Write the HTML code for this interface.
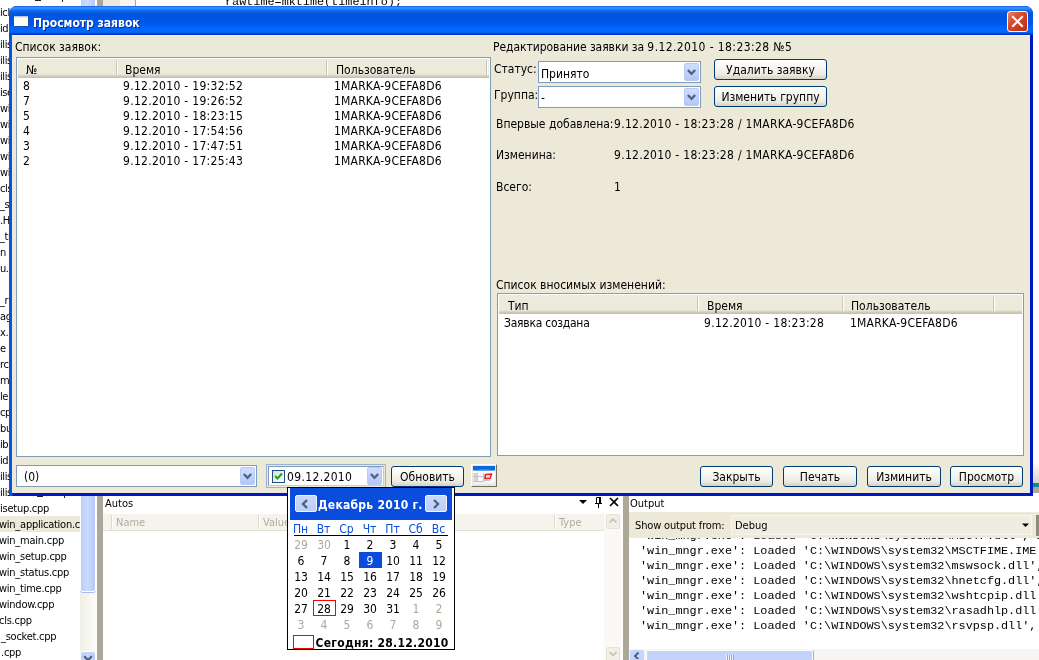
<!DOCTYPE html>
<html lang="ru">
<head>
<meta charset="utf-8">
<title>Просмотр заявок</title>
<style>
html,body{margin:0;padding:0;}
body{width:1039px;height:660px;overflow:hidden;background:#fff;position:relative;
  font-family:"DejaVu Sans Condensed","DejaVu Sans","Liberation Sans",sans-serif;font-size:12px;color:#000;}
.a{position:absolute;}
#bg,#win,#cal{will-change:transform;}
.t{position:absolute;white-space:nowrap;line-height:15px;height:15px;font-size:12px;margin-top:1px;}
.s{font-family:"DejaVu Sans Condensed","DejaVu Sans","Liberation Sans",sans-serif;font-size:11px;line-height:16px;height:16px;position:absolute;white-space:nowrap;}
.f{letter-spacing:-.25px;}
.m{font-family:"Liberation Mono","DejaVu Sans Mono",monospace;font-size:11.8px;line-height:15px;height:15px;position:absolute;white-space:pre;}
/* ---------- background IDE ---------- */
#bg{left:0;top:0;width:1039px;height:660px;overflow:hidden;}
/* ---------- dialog ---------- */
#win{left:9px;top:6px;width:1024px;height:490px;background:linear-gradient(to right,#0b50e6 0,#0b50e6 3px,#0018c4 4px,#0018c4 100%);border-radius:8px 8px 0 0;overflow:hidden;}
#tb{left:0;top:0;width:1024px;height:29px;
  background:linear-gradient(to bottom,#0a50d4 0,#2e86fc 1px,#3b92ff 2px,#1d7bfc 3.5px,#0a67f2 5px,#025adc 7px,#0055dc 9px,#0055e3 12px,#0058ea 18px,#0363fa 21px,#0468ff 25px,#0560f0 26.5px,#0141d3 27.8px,#002fbf 29px);}
#cl{left:3px;top:29px;width:1018px;height:458px;background:#ece9d8;box-shadow:inset 0 1px 0 #f7f3e2;}
.lst{background:#fff;border:1px solid #7f9db9;box-sizing:border-box;overflow:hidden;}
.hd{left:1px;top:1px;right:1px;height:19px;background:linear-gradient(to bottom,#ebeadb 0,#ebeadb 15px,#e0dccc 16px,#d3cfbf 17px,#c8c4b4 18px,#c5c1b1 19px);}
.sep{top:2px;width:1px;height:14px;background:#c7c5b2;box-shadow:1px 0 0 #fff;}
.cb{background:#fff;border:1px solid #7f9db9;box-sizing:border-box;}
.dd{width:15px;background:linear-gradient(to bottom,#cfdcfd 0,#c1d2fb 50%,#b4c8f6 100%);border:1px solid #b8c9f5;border-radius:2px;box-sizing:border-box;}
.dd svg{position:absolute;left:2px;top:50%;margin-top:-3px;}
.c{width:23px;height:16px;line-height:19px;text-align:center;font-size:12px;margin-top:0;text-indent:-1px;}
.d{letter-spacing:.3px;}
.btn{box-sizing:border-box;border:1px solid #003c74;border-radius:3px;background:linear-gradient(to bottom,#ffffff 0,#f6f5f0 40%,#ecebe5 75%,#d6d0c5 100%);text-align:center;font-size:12px;line-height:21px;white-space:nowrap;}
</style>
</head>
<body>
<div id="bg" class="a">
<div class="a" style="left:0;top:0;width:80px;height:660px;background:#fff;overflow:hidden;">
<div class="a" style="left:0;top:516px;width:80px;height:16px;background:#ece9d8;"></div>
<div class="s" style="left:0;top:5px;letter-spacing:-.4px;">ich</div>
<div class="s" style="left:0;top:21px;letter-spacing:-.4px;">id.</div>
<div class="s" style="left:0;top:37px;letter-spacing:-.4px;">ilis</div>
<div class="s" style="left:0;top:53px;letter-spacing:-.4px;">ilis</div>
<div class="s" style="left:0;top:69px;letter-spacing:-.4px;">ilis</div>
<div class="s" style="left:0;top:85px;letter-spacing:-.4px;">ise</div>
<div class="s" style="left:0;top:101px;letter-spacing:-.4px;">wi</div>
<div class="s" style="left:0;top:117px;letter-spacing:-.4px;">wi</div>
<div class="s" style="left:0;top:133px;letter-spacing:-.4px;">wi</div>
<div class="s" style="left:0;top:149px;letter-spacing:-.4px;">wi</div>
<div class="s" style="left:0;top:165px;letter-spacing:-.4px;">wi</div>
<div class="s" style="left:0;top:181px;letter-spacing:-.4px;">cls</div>
<div class="s" style="left:0;top:197px;letter-spacing:-.4px;">_s</div>
<div class="s" style="left:0;top:213px;letter-spacing:-.4px;">.H</div>
<div class="s" style="left:0;top:229px;letter-spacing:-.4px;">_tr</div>
<div class="s" style="left:0;top:245px;letter-spacing:-.4px;">n</div>
<div class="s" style="left:0;top:261px;letter-spacing:-.4px;">u.l</div>
<div class="s" style="left:0;top:293px;letter-spacing:-.4px;">_r</div>
<div class="s" style="left:0;top:309px;letter-spacing:-.4px;">ag</div>
<div class="s" style="left:0;top:325px;letter-spacing:-.4px;">x.</div>
<div class="s" style="left:0;top:341px;letter-spacing:-.4px;">e F</div>
<div class="s" style="left:0;top:357px;letter-spacing:-.4px;">rc</div>
<div class="s" style="left:0;top:373px;letter-spacing:-.4px;">mr</div>
<div class="s" style="left:0;top:389px;letter-spacing:-.4px;">le</div>
<div class="s" style="left:0;top:405px;letter-spacing:-.4px;">cp</div>
<div class="s" style="left:0;top:421px;letter-spacing:-.4px;">bu</div>
<div class="s" style="left:0;top:437px;letter-spacing:-.4px;">ibu</div>
<div class="s" style="left:0;top:453px;letter-spacing:-.4px;">id.</div>
<div class="s" style="left:0;top:469px;letter-spacing:-.4px;">ilis</div>
<div class="s" style="left:0;top:485px;letter-spacing:-.4px;">ilis</div>
<div class="s f" style="left:0px;top:501px;">isetup.cpp</div>
<div class="s f" style="left:-1px;top:517px;">win_application.cpp</div>
<div class="s f" style="left:-1px;top:533px;">win_main.cpp</div>
<div class="s f" style="left:-1px;top:549px;">win_setup.cpp</div>
<div class="s f" style="left:-1px;top:565px;">win_status.cpp</div>
<div class="s f" style="left:-1px;top:581px;">win_time.cpp</div>
<div class="s f" style="left:-1px;top:597px;">window.cpp</div>
<div class="s f" style="left:-1px;top:613px;">cls.cpp</div>
<div class="s f" style="left:1px;top:629px;">_socket.cpp</div>
<div class="s f" style="left:1px;top:645px;">.cpp</div>
<div class="a" style="left:37px;top:496px;width:6px;height:1px;background:#222;"></div><div class="a" style="left:64px;top:496px;width:1px;height:2px;background:#222;"></div><div class="a" style="left:35px;top:0;width:6px;height:1px;background:#222;"></div><div class="a" style="left:62px;top:0;width:1px;height:2px;background:#222;"></div>
</div>
<div class="a" style="left:80px;top:0;width:17px;height:660px;background:linear-gradient(to right,#efeee6,#fdfdfb);"></div>
<div class="a" style="left:80px;top:-3px;width:16px;height:595px;box-sizing:border-box;border:1px solid #fff;border-radius:3px;background:linear-gradient(to right,#bccdf9 0,#cbdafe 45%,#c3d3fc 70%,#b5c7f6 100%);box-shadow:0 1px 0 #a9bdf0;"></div>
<div class="a" style="left:80px;top:651px;width:16px;height:12px;box-sizing:border-box;border:1px solid #fff;border-radius:3px;background:linear-gradient(to right,#bccdf9,#c9d8fd 50%,#b9cbf8);"><svg width="14" height="9" viewBox="0 0 14 9" style="position:absolute;left:0;top:0"><path d="M3.2 4.2 L7 8 L10.8 4.2" stroke="#4d6185" stroke-width="2.2" fill="none"/></svg></div>
<div class="a" style="left:97px;top:0;width:6px;height:660px;background:#aca899;"></div>
<div class="a" style="left:103px;top:0;width:17px;height:6px;background:#ece9d8;"></div>
<div class="a" style="left:120px;top:0;width:15px;height:6px;background:#f6f5ee;"></div>
<div class="a" style="left:135px;top:0;width:1px;height:6px;background:#a5a5a5;"></div>
<div class="m" style="left:225px;top:-5.5px;">rawtime=mktime(timeinfo);</div>
<div class="a" style="left:1033px;top:464px;width:6px;height:19px;background:linear-gradient(to bottom,#fafaf7,#d9d6c8);"></div>
<div class="a" style="left:1033px;top:483px;width:6px;height:4px;background:#0b8a86;"></div>
<div class="a" style="left:1033px;top:487px;width:6px;height:6px;background:#aca899;"></div>
<div class="s" style="left:105px;top:496px;">Autos</div>
<div class="a" style="left:103px;top:514px;width:501px;height:16px;background:#f5f4ec;border-bottom:1px solid #e3e0d3;"></div>
<div class="a" style="left:111px;top:515px;width:1px;height:14px;background:#dddac9;box-shadow:1px 0 0 #fff;"></div>
<div class="a" style="left:258px;top:515px;width:1px;height:14px;background:#dddac9;box-shadow:1px 0 0 #fff;"></div>
<div class="a" style="left:554px;top:515px;width:1px;height:14px;background:#dddac9;box-shadow:1px 0 0 #fff;"></div>
<div class="s" style="left:116px;top:515px;color:#b0ad9f;">Name</div><div class="s" style="left:263px;top:515px;color:#b0ad9f;">Value</div><div class="s" style="left:559px;top:515px;color:#b0ad9f;">Type</div>
<svg class="a" style="left:578px;top:496px" width="42" height="14" viewBox="0 0 42 14"><path d="M1 4 L9 4 L5 8 Z" fill="#000"/><path d="M18.5 1.5 H22 V7.5 M18.5 1.5 V7.5 M17 7.5 H24 M20.5 8 V12" stroke="#000" stroke-width="1" fill="none"/><path d="M22 1 V7.5" stroke="#000" stroke-width="2" fill="none"/><path d="M32 2 L40 10 M40 2 L32 10" stroke="#000" stroke-width="1.6" fill="none"/></svg>
<div class="a" style="left:604px;top:514px;width:17px;height:146px;background:#faf9f5;"></div>
<div class="a" style="left:606px;top:514px;width:14px;height:15px;background:#f1efe6;border:1px solid #e6e3d6;box-sizing:border-box;border-radius:2px;"><svg width="14" height="14" viewBox="0 0 14 14" style="position:absolute;left:-1px;top:-1px"><path d="M3.5 8.5 L7 5 L10.5 8.5" stroke="#c9c7ba" stroke-width="1.8" fill="none"/></svg></div>
<div class="a" style="left:606px;top:647px;width:14px;height:15px;background:#f1efe6;border:1px solid #e6e3d6;box-sizing:border-box;border-radius:2px;"><svg width="14" height="14" viewBox="0 0 14 14" style="position:absolute;left:-1px;top:-1px"><path d="M3.5 5 L7 8.5 L10.5 5" stroke="#c9c7ba" stroke-width="1.8" fill="none"/></svg></div>
<div class="a" style="left:623px;top:496px;width:6px;height:164px;background:#aca899;"></div>
<div class="s" style="left:630px;top:496px;">Output</div>
<div class="a" style="left:629px;top:512px;width:410px;height:26px;background:#ece9d8;"></div>
<div class="s" style="left:635px;top:518px;letter-spacing:-.15px;">Show output from:</div>
<div class="a" style="left:731px;top:515px;width:301px;height:20px;background:#efede2;border:1px solid #f6f5ee;box-sizing:border-box;"></div>
<div class="s" style="left:735px;top:518px;">Debug</div>
<svg class="a" style="left:1021px;top:523px" width="9" height="5" viewBox="0 0 9 5"><path d="M1 0.5 H8 L4.5 4 Z" fill="#000"/></svg>
<div class="a" style="left:1036px;top:515px;width:3px;height:21px;background:#8d8a7c;"></div>
<div class="a" style="left:629px;top:538px;width:410px;height:111px;overflow:hidden;">
<div class="m" style="left:11px;top:-9px;">'win_mngr.exe': Loaded 'C:\WINDOWS\system32\MSCTF.dll', B</div>
<div class="m" style="left:11px;top:6px;">'win_mngr.exe': Loaded 'C:\WINDOWS\system32\MSCTFIME.IME'</div>
<div class="m" style="left:11px;top:21px;">'win_mngr.exe': Loaded 'C:\WINDOWS\system32\mswsock.dll',</div>
<div class="m" style="left:11px;top:36px;">'win_mngr.exe': Loaded 'C:\WINDOWS\system32\hnetcfg.dll',</div>
<div class="m" style="left:11px;top:51px;">'win_mngr.exe': Loaded 'C:\WINDOWS\system32\wshtcpip.dll'</div>
<div class="m" style="left:11px;top:66px;">'win_mngr.exe': Loaded 'C:\WINDOWS\system32\rasadhlp.dll'</div>
<div class="m" style="left:11px;top:81px;">'win_mngr.exe': Loaded 'C:\WINDOWS\system32\rsvpsp.dll',</div>
</div>
<div class="a" style="left:629px;top:649px;width:410px;height:11px;background:#f6f5f1;"></div>
<div class="a" style="left:630px;top:650px;width:14px;height:10px;background:#c6d5fd;border-radius:2px 2px 0 0;"><svg width="14" height="9" viewBox="0 0 14 9" style="position:absolute;left:0;top:0"><path d="M8.5 2.5 L5 6 L8.5 9.5" stroke="#4d6185" stroke-width="2" fill="none"/></svg></div>
<div class="a" style="left:646px;top:650px;width:167px;height:10px;background:#c3d3fc;border:1px solid #fff;border-bottom:0;box-sizing:border-box;border-radius:2px 2px 0 0;box-shadow:1px 0 0 #98b0e8;"></div>
<div class="a" style="left:726px;top:655px;width:1px;height:5px;background:#eef3ff;box-shadow:1px 0 0 #8ea5e0;"></div>
<div class="a" style="left:728px;top:655px;width:1px;height:5px;background:#eef3ff;box-shadow:1px 0 0 #8ea5e0;"></div>
<div class="a" style="left:730px;top:655px;width:1px;height:5px;background:#eef3ff;box-shadow:1px 0 0 #8ea5e0;"></div>
<div class="a" style="left:732px;top:655px;width:1px;height:5px;background:#eef3ff;box-shadow:1px 0 0 #8ea5e0;"></div>
</div>

<div id="win" class="a">
  <div id="tb" class="a">
    <div class="a" style="left:5px;top:10px;width:14px;height:10px;background:linear-gradient(to bottom,#9db8ee 0,#fffef2 2px);box-shadow:1px 1px 0 #1d4fae;"></div>
    <div class="a" style="left:24px;top:9px;font-family:'DejaVu Sans Condensed','Liberation Sans',sans-serif;font-weight:bold;font-size:12px;line-height:17px;color:#fff;white-space:nowrap;text-shadow:1px 1px 0 #0a2f93;">Просмотр заявок</div>
    <div class="a" style="left:998px;top:5px;width:21px;height:21px;box-sizing:border-box;border:1px solid #fff;border-radius:3px;background:linear-gradient(135deg,#e9866b 0,#d8502f 35%,#c93a1b 70%,#b5310f 100%);">
      <svg width="19" height="19" viewBox="0 0 19 19" style="position:absolute;left:0;top:0"><path d="M5 5 L14 14 M14 5 L5 14" stroke="#fff" stroke-width="2.1" stroke-linecap="square" fill="none"/></svg>
    </div>
  </div>
  <div id="cl" class="a">
<div class="a" id="pc" style="left:-12px;top:-35px;width:0;height:0;">
<div class="t" style="left:15px;top:39px;">Список заявок:</div>
<div class="a lst" style="left:16px;top:57px;width:475px;height:400px;">
<div class="a hd"><div class="a sep" style="left:98px"></div><div class="a sep" style="left:308px"></div><div class="a sep" style="left:468px"></div>
<div class="t" style="left:8px;top:3px;">№</div><div class="t" style="left:107px;top:3px;">Время</div><div class="t" style="left:318px;top:3px;">Пользователь</div></div>
<div class="t" style="left:6px;top:20px;">8</div><div class="t d" style="left:106px;top:20px;">9.12.2010 - 19:32:52</div><div class="t" style="left:317px;top:20px;letter-spacing:.2px;">1MARKA-9CEFA8D6</div>
<div class="t" style="left:6px;top:35px;">7</div><div class="t d" style="left:106px;top:35px;">9.12.2010 - 19:26:52</div><div class="t" style="left:317px;top:35px;letter-spacing:.2px;">1MARKA-9CEFA8D6</div>
<div class="t" style="left:6px;top:50px;">5</div><div class="t d" style="left:106px;top:50px;">9.12.2010 - 18:23:15</div><div class="t" style="left:317px;top:50px;letter-spacing:.2px;">1MARKA-9CEFA8D6</div>
<div class="t" style="left:6px;top:65px;">4</div><div class="t d" style="left:106px;top:65px;">9.12.2010 - 17:54:56</div><div class="t" style="left:317px;top:65px;letter-spacing:.2px;">1MARKA-9CEFA8D6</div>
<div class="t" style="left:6px;top:80px;">3</div><div class="t d" style="left:106px;top:80px;">9.12.2010 - 17:47:51</div><div class="t" style="left:317px;top:80px;letter-spacing:.2px;">1MARKA-9CEFA8D6</div>
<div class="t" style="left:6px;top:95px;">2</div><div class="t d" style="left:106px;top:95px;">9.12.2010 - 17:25:43</div><div class="t" style="left:317px;top:95px;letter-spacing:.2px;">1MARKA-9CEFA8D6</div>
</div>
<div class="a cb" style="left:16px;top:465px;width:241px;height:22px;"><div class="t" style="left:7px;top:3px;">(0)</div><div class="a dd" style="right:1px;top:1px;height:18px;"><svg width="9" height="7" viewBox="0 0 9 7"><path d="M0.8 1 L4.5 4.8 L8.2 1" stroke="#4d6185" stroke-width="2.3" fill="none"/></svg></div></div>
<div class="a" style="left:266px;top:464px;width:120px;height:24px;box-sizing:border-box;border:1px solid #9db2d0;background:#ece9d8;"><div class="a" style="left:1px;top:1px;right:1px;bottom:1px;background:#fff;border:1px solid #7f9db9;border-right-color:#c0d0e4;border-bottom-color:#c0d0e4;"></div>
<div class="a" style="left:5px;top:5px;width:13px;height:13px;box-sizing:border-box;border:1px solid #1c5180;background:linear-gradient(135deg,#dcdcd7,#fff);"><svg width="11" height="11" viewBox="0 0 11 11" style="position:absolute;left:0;top:0"><path d="M2 5 L4.5 7.5 L9 2.5" stroke="#21a121" stroke-width="2" fill="none"/></svg></div>
<div class="t" style="left:20px;top:4px;letter-spacing:.35px;">09.12.2010</div><div class="a dd" style="left:100px;top:2px;height:18px;width:15px;"><svg width="9" height="7" viewBox="0 0 9 7"><path d="M0.8 1 L4.5 4.8 L8.2 1" stroke="#4d6185" stroke-width="2.3" fill="none"/></svg></div></div>
<div class="a btn" style="left:391px;top:466px;width:73px;height:21px;">Обновить</div>
<div class="a" id="ib" style="left:471px;top:464px;width:26px;height:23px;box-sizing:border-box;border:1px solid #fff;border-right-color:#716f64;border-bottom-color:#716f64;background:#ece9d8;">
<svg width="24" height="21" viewBox="0 0 24 21" style="position:absolute;left:0;top:0">
<rect x="1" y="1" width="22" height="18" fill="#fbfbfd"/>
<rect x="1" y="1" width="22" height="4" fill="#0a67dc"/>
<path d="M1 5.2 Q12 3.6 23 5.2 V6 H1 Z" fill="#5fa3ee"/>
<rect x="1.5" y="8" width="4.5" height="8" fill="#d6d6d6"/>
<path d="M1 11.5 H12 M5.5 8 V16 M11.5 8 V16 M12 15.5 H18 M1 16.5 H12" stroke="#c4c4c4" stroke-width="1" fill="none"/>
<rect x="12" y="9" width="6" height="6" fill="#d5d8d2"/>
<path d="M13.6 9.4 L19.6 9 L18.2 13.2 L13 13.4 Z" fill="#dde3dc" stroke="#ee1c24" stroke-width="1.5" stroke-linejoin="round"/>
<rect x="1" y="17" width="22" height="2" fill="#f1f1f6"/>
</svg></div>
<div class="t" style="left:493px;top:39px;"><span style="letter-spacing:-.05px">Редактирование заявки за </span><span style="letter-spacing:.4px">9.12.2010 - 18:23:28 №5</span></div>
<div class="t" style="left:494px;top:61px;">Статус:</div>
<div class="a cb" style="left:538px;top:61px;width:163px;height:22px;"><div class="t" style="left:2px;top:4px;">Принято</div><div class="a dd" style="right:1px;top:1px;height:18px;"><svg width="9" height="7" viewBox="0 0 9 7"><path d="M0.8 1 L4.5 4.8 L8.2 1" stroke="#4d6185" stroke-width="2.3" fill="none"/></svg></div></div>
<div class="t" style="left:494px;top:87px;">Группа:</div>
<div class="a cb" style="left:538px;top:86px;width:163px;height:22px;"><div class="t" style="left:2px;top:3px;">-</div><div class="a dd" style="right:1px;top:1px;height:18px;"><svg width="9" height="7" viewBox="0 0 9 7"><path d="M0.8 1 L4.5 4.8 L8.2 1" stroke="#4d6185" stroke-width="2.3" fill="none"/></svg></div></div>
<div class="a btn" style="left:714px;top:59px;width:113px;height:21px;line-height:21px;">Удалить заявку</div>
<div class="a btn" style="left:714px;top:86px;width:113px;height:21px;line-height:21px;">Изменить группу</div>
<div class="t" style="left:496px;top:116px;">Впервые добавлена:</div><div class="t d" style="left:614px;top:116px;">9.12.2010 - 18:23:28 / 1MARKA-9CEFA8D6</div>
<div class="t" style="left:496px;top:147px;">Изменина:</div><div class="t d" style="left:614px;top:147px;">9.12.2010 - 18:23:28 / 1MARKA-9CEFA8D6</div>
<div class="t" style="left:496px;top:179px;">Всего:</div><div class="t" style="left:614px;top:179px;">1</div>
<div class="t" style="left:496px;top:277px;">Список вносимых изменений:</div>
<div class="a lst" style="left:497px;top:293px;width:527px;height:163px;">
<div class="a hd"><div class="a sep" style="left:198px"></div><div class="a sep" style="left:343px"></div><div class="a sep" style="left:494px"></div>
<div class="t" style="left:9px;top:3px;">Тип</div><div class="t" style="left:208px;top:3px;">Время</div><div class="t" style="left:352px;top:3px;">Пользователь</div></div>
<div class="t" style="left:6px;top:21px;letter-spacing:-.25px;">Заявка создана</div><div class="t d" style="left:206px;top:21px;">9.12.2010 - 18:23:28</div><div class="t" style="left:352px;top:21px;letter-spacing:.2px;">1MARKA-9CEFA8D6</div>
</div>
<div class="a btn" style="left:700px;top:466px;width:73px;height:21px;">Закрыть</div>
<div class="a btn" style="left:783px;top:466px;width:74px;height:21px;">Печать</div>
<div class="a btn" style="left:867px;top:466px;width:74px;height:21px;">Изминить</div>
<div class="a btn" style="left:950px;top:466px;width:73px;height:21px;">Просмотр</div>
</div>
  </div>
</div>
<div id="cal" class="a" style="left:287px;top:487px;width:168px;height:163px;box-sizing:border-box;border:1px solid #000;background:#fff;">
<div class="a" style="left:2px;top:0;width:162px;height:32px;background:#0a4ddd;"></div>
<div class="a" style="left:7px;top:7px;width:22px;height:17px;box-sizing:border-box;border:1px solid #f2f4fb;border-radius:2px;background:linear-gradient(to bottom,#cad8fb,#bccdf7);"><svg width="10" height="10" viewBox="0 0 10 10" style="position:absolute;left:3.5px;top:2.5px"><path d="M7 1 L3 5 L7 9" stroke="#4d6185" stroke-width="2.4" fill="none"/></svg></div>
<div class="a" style="left:137px;top:7px;width:22px;height:17px;box-sizing:border-box;border:1px solid #f2f4fb;border-radius:2px;background:linear-gradient(to bottom,#cad8fb,#bccdf7);"><svg width="10" height="10" viewBox="0 0 10 10" style="position:absolute;left:5px;top:2.5px"><path d="M3 1 L7 5 L3 9" stroke="#4d6185" stroke-width="2.4" fill="none"/></svg></div>
<div class="t" style="left:30px;top:9px;font-weight:bold;color:#fff;letter-spacing:.25px;">Декабрь 2010 г.</div>
<div class="t c" style="left:2px;top:32px;color:#0a4ddd;text-indent:-2px;">Пн</div>
<div class="t c" style="left:25px;top:32px;color:#0a4ddd;text-indent:-2px;">Вт</div>
<div class="t c" style="left:48px;top:32px;color:#0a4ddd;text-indent:-2px;">Ср</div>
<div class="t c" style="left:71px;top:32px;color:#0a4ddd;text-indent:-2px;">Чт</div>
<div class="t c" style="left:94px;top:32px;color:#0a4ddd;text-indent:-2px;">Пт</div>
<div class="t c" style="left:117px;top:32px;color:#0a4ddd;text-indent:-2px;">Сб</div>
<div class="t c" style="left:140px;top:32px;color:#0a4ddd;text-indent:-2px;">Вс</div>
<div class="a" style="left:6px;top:47px;width:154px;height:1px;background:#000;"></div>
<div class="t c" style="left:2px;top:48px;color:#aca899;">29</div>
<div class="t c" style="left:25px;top:48px;color:#aca899;">30</div>
<div class="t c" style="left:48px;top:48px;">1</div>
<div class="t c" style="left:71px;top:48px;">2</div>
<div class="t c" style="left:94px;top:48px;">3</div>
<div class="t c" style="left:117px;top:48px;">4</div>
<div class="t c" style="left:140px;top:48px;">5</div>
<div class="t c" style="left:2px;top:64px;">6</div>
<div class="t c" style="left:25px;top:64px;">7</div>
<div class="t c" style="left:48px;top:64px;">8</div>
<div class="t c" style="left:71px;top:64px;background:#0a4ddd;color:#fff;">9</div>
<div class="t c" style="left:94px;top:64px;">10</div>
<div class="t c" style="left:117px;top:64px;">11</div>
<div class="t c" style="left:140px;top:64px;">12</div>
<div class="t c" style="left:2px;top:80px;">13</div>
<div class="t c" style="left:25px;top:80px;">14</div>
<div class="t c" style="left:48px;top:80px;">15</div>
<div class="t c" style="left:71px;top:80px;">16</div>
<div class="t c" style="left:94px;top:80px;">17</div>
<div class="t c" style="left:117px;top:80px;">18</div>
<div class="t c" style="left:140px;top:80px;">19</div>
<div class="t c" style="left:2px;top:96px;">20</div>
<div class="t c" style="left:25px;top:96px;">21</div>
<div class="t c" style="left:48px;top:96px;">22</div>
<div class="t c" style="left:71px;top:96px;">23</div>
<div class="t c" style="left:94px;top:96px;">24</div>
<div class="t c" style="left:117px;top:96px;">25</div>
<div class="t c" style="left:140px;top:96px;">26</div>
<div class="t c" style="left:2px;top:112px;">27</div>
<div class="t c" style="left:25px;top:112px;box-shadow:inset 0 0 0 1px #f00;">28</div>
<div class="t c" style="left:48px;top:112px;">29</div>
<div class="t c" style="left:71px;top:112px;">30</div>
<div class="t c" style="left:94px;top:112px;">31</div>
<div class="t c" style="left:117px;top:112px;color:#aca899;">1</div>
<div class="t c" style="left:140px;top:112px;color:#aca899;">2</div>
<div class="t c" style="left:2px;top:128px;color:#aca899;">3</div>
<div class="t c" style="left:25px;top:128px;color:#aca899;">4</div>
<div class="t c" style="left:48px;top:128px;color:#aca899;">5</div>
<div class="t c" style="left:71px;top:128px;color:#aca899;">6</div>
<div class="t c" style="left:94px;top:128px;color:#aca899;">7</div>
<div class="t c" style="left:117px;top:128px;color:#aca899;">8</div>
<div class="t c" style="left:140px;top:128px;color:#aca899;">9</div>
<div class="a" style="left:5px;top:147px;width:21px;height:14px;box-sizing:border-box;border:1px solid #f00;"></div>
<div class="t" style="left:27.5px;top:147px;font-weight:bold;letter-spacing:.28px;">Сегодня: 28.12.2010</div>
</div>
</body>
</html>
